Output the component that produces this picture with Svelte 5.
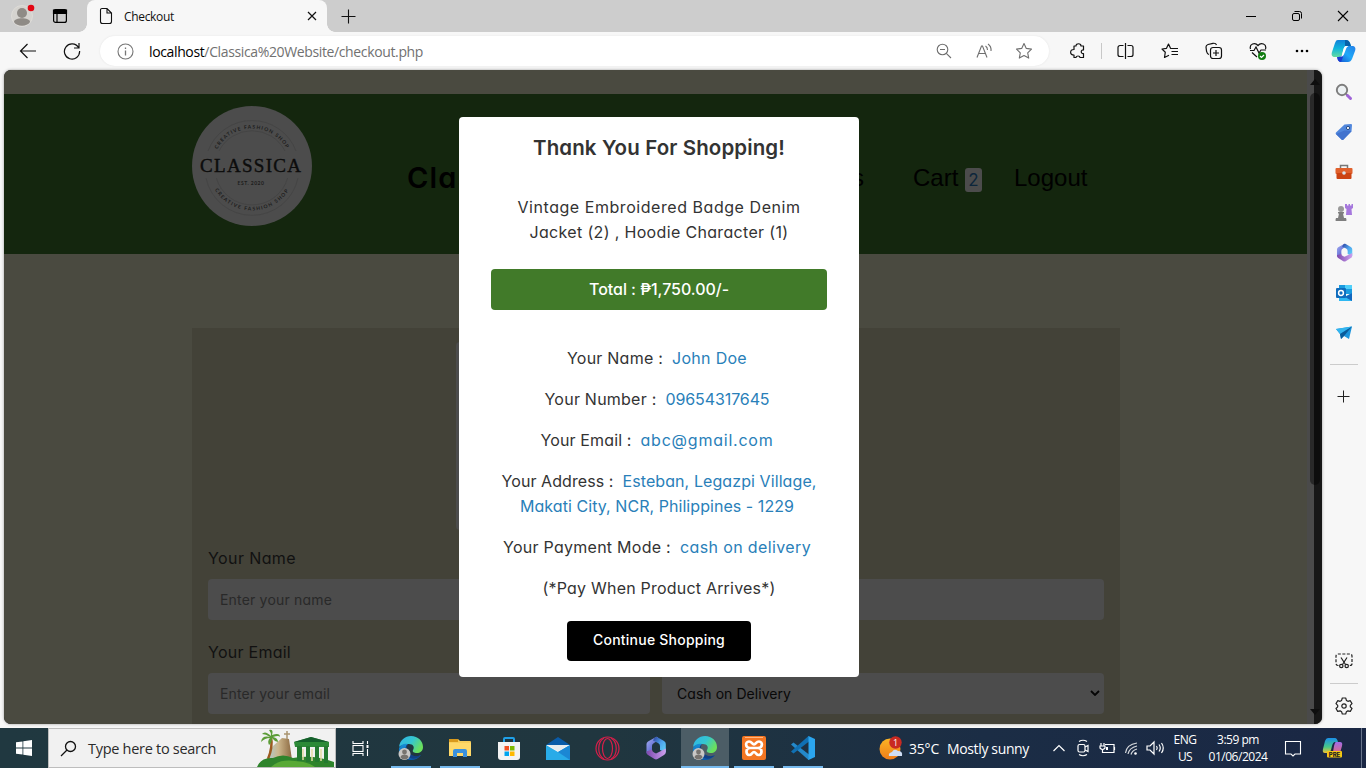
<script>
  const details = [
    [['Your Name :', 96, 'John Doe', 75]],
    [['Your Number :', 112, '09654317645', 104]],
    [['Your Email :', 91, 'abc@gmail.com', 133]],
    [['Your Address :', 112, 'Esteban, Legazpi Village,', 194], ['', 0, 'Makati City, NCR, Philippines - 1229', 274]],
    [['Your Payment Mode :', 168, 'cash on delivery', 131]]
  ];

  // Spreads letters so that a line takes the given width.
  function fit(node, width) {
    const n = node.textContent.length;
    const now = node.getBoundingClientRect().width;
    node.style.letterSpacing = `${(width - now) / n}px`;
  }
</script>

{#snippet edge()}
  <svg width="26" height="26" viewBox="0 0 26 26">
    <defs>
      <linearGradient id="eg1" x1="0" y1="0" x2="1" y2=".5"><stop offset="0" stop-color="#2fb4e8" /><stop offset=".55" stop-color="#35c6d0" /><stop offset="1" stop-color="#6be05c" /></linearGradient>
      <linearGradient id="eg2" x1="0" y1="0" x2="0" y2="1"><stop offset="0" stop-color="#1790d8" /><stop offset="1" stop-color="#0b57a8" /></linearGradient>
    </defs>
    <path d="M1 12C2 5 7 1 13 1c7 0 12 5 12 11 0 4-3 6-6 6s-5-1-4-3c2-3 0-6-4-6C6 9 2 11 1 12z" fill="url(#eg1)" />
    <path d="M1 13c2-4 6-5 9-4-3 2-3 7 0 10 3 3 8 4 13 1-2 3-6 5-10 5C6 25 0 20 1 13z" fill="url(#eg2)" />
    <path d="M10 9c-2 3-1 9 4 11 4 2 7 1 9 0-4 5-11 5-14 0-2-4-2-9 1-11z" fill="#123f84" />
    <circle cx="6.500" cy="19" r="6" fill="#c9c7c5" /><circle cx="6.500" cy="17" r="2.400" fill="#77736f" /><path d="M2.500 22.500c0-4 8-4 8 0-2 2.500-6 2.500-8 0z" fill="#77736f" />
  </svg>
{/snippet}
{#snippet office(s)}
  <svg width={s} height={s} viewBox="0 0 24 24">
    <defs>
      <linearGradient id="of1" x1="0" y1="0" x2="1" y2="1"><stop offset="0" stop-color="#a8b0f4" /><stop offset="1" stop-color="#3b4ac0" /></linearGradient>
      <linearGradient id="of2" x1="0" y1="0" x2="1" y2="1"><stop offset="0" stop-color="#2b3f9c" /><stop offset=".5" stop-color="#4fa4ee" /><stop offset="1" stop-color="#60d8f8" /></linearGradient>
      <linearGradient id="of3" x1="0" y1="0" x2="1" y2="0"><stop offset="0" stop-color="#7d48ae" /><stop offset="1" stop-color="#cda0ee" /></linearGradient>
    </defs>
    <path d="M12 1 4 5.500Q2.500 6.500 2.500 8v9.500l5.500-3V10q0-2 2-3l4-2.500V1.500q-1-1-2-.5z" fill="url(#of1)" />
    <path d="M10.500 1.800Q12 .500 13.500 1.300L20 5q1.800 1 1.800 3v8.500L16 14v-4q0-2-2-3L9 4.500z" fill="url(#of2)" />
    <path d="M2.500 15.500 8 13.500q0 2 2 3l2 1 4-2 5.800-3v3.500q0 2-1.800 3l-6.500 4q-1.500.8-3 0L4 19q-1.500-1-1.500-3.500z" fill="url(#of3)" />
  </svg>
{/snippet}
{#snippet copilot(s)}
  <svg width={s} height={s} viewBox="0 0 26 26">
    <defs>
      <linearGradient id="cp1" x1="0" y1="0" x2="0" y2="1"><stop offset="0" stop-color="#1180d8" /><stop offset=".5" stop-color="#10b5dc" /><stop offset="1" stop-color="#63dca0" /></linearGradient>
      <linearGradient id="cp2" x1="1" y1="0" x2="0" y2="1"><stop offset="0" stop-color="#2480e8" /><stop offset=".5" stop-color="#1fa8f8" /><stop offset="1" stop-color="#1452d0" /></linearGradient>
    </defs>
    <path d="M7 2h8c2 0 3 1 4 3l1 3h-4c-3 0-3 2-4 5l-1 4c-1 2-2 2-4 2H4c-3 0-4-2-3-5L4 5c1-2 1-3 3-3z" fill="url(#cp1)" />
    <path d="M16 8h5c3 0 4 2 3 5l-3 8c-1 2-2 3-4 3h-7c-2 0-3-2-3-5 3 0 4-1 5-3l2-5c0-2 1-3 2-3z" fill="url(#cp2)" />
    <path d="M14 2h1c2 0 3 1 4 3l1 3h-6z" fill="#0761a8" /><path d="M6 19c3 0 4 0 5-2l1 2-2 5c-2 0-4-2-4-5z" fill="#1a3bd0" />
    <path d="M16 8c-3 0-3 2-4 5l-1 4c-.5 1.500-1.500 2-3 2 3 0 4.500-1 5.500-4l1.500-4q.5-2 2.500-3z" fill="#fff" />
  </svg>
{/snippet}

<div class="desk">
  <div class="tabs">
    <div class="tc pic">
      <svg width="26" height="26" viewBox="0 0 26 26"><circle cx="12" cy="13" r="10.500" fill="#d5d3cf" stroke="#dedcd8" /><circle cx="12" cy="10" r="5" fill="#8f8b86" /><path d="M4 19c0-5 16-5 16 0-3 5-13 5-16 0z" fill="#8f8b86" /><circle cx="21" cy="5" r="3.300" fill="#e30613" /></svg>
    </div>
    <div class="tc ws"><svg width="16" height="16" viewBox="0 0 16 16"><rect x="1.600" y="1.600" width="12.800" height="12.800" rx="2" fill="none" stroke="#000" stroke-width="1.200" /><path d="M1.500 2h13v3.500h-13zM5 5v9" stroke="#000" stroke-width="1.200" /></svg></div>
    <div class="tab">
      <svg width="14" height="18" viewBox="0 0 14 18"><path d="M3 1.500h5L12.500 6v8.500a2 2 0 0 1-2 2h-7a2 2 0 0 1-2-2V3a1.500 1.500 0 0 1 1.500-1.500zM8 1.500V6h4.500" fill="none" stroke="#111" stroke-width="1.100" /></svg>
      <span class="tt" use:fit={50}>Checkout</span>
      <svg class="x" width="10" height="10" viewBox="0 0 10 10"><path d="M1 1l8 8M9 1 1 9" stroke="#111" stroke-width="1.200" /></svg>
    </div>
    <svg class="plus" width="15" height="15" viewBox="0 0 15 15"><path d="M7.500.500v14M.500 7.500h14" stroke="#111" stroke-width="1.100" /></svg>
    <div class="win">
      <svg width="46" height="32" viewBox="0 0 46 32"><path d="M18 16.500h10" stroke="#000" /></svg>
      <svg width="46" height="32" viewBox="0 0 46 32"><rect x="18.500" y="13.500" width="7" height="7" rx="1.500" fill="none" stroke="#000" /><path d="M20.500 11.500h5a2 2 0 0 1 2 2v5" fill="none" stroke="#000" /></svg>
      <svg width="46" height="32" viewBox="0 0 46 32"><path d="M18 11l10 10M28 11 18 21" stroke="#000" stroke-width="1.100" /></svg>
    </div>
  </div>

  <div class="bar">
    <div class="b first"><svg width="18" height="16" viewBox="0 0 18 16" class="ln"><path d="M17 8H2M8.500 1 1.500 8l7 7" /></svg></div>
    <div class="b"><svg width="18" height="18" viewBox="0 0 18 18" class="ln"><path d="M15.500 5.500A7.600 7.600 0 1 0 16.600 9M16 1v5h-5" /></svg></div>
    <div class="pill">
      <svg class="info" width="17" height="17" viewBox="0 0 17 17"><circle cx="8.500" cy="8.500" r="7.500" fill="none" stroke="#767676" stroke-width="1.100" /><path d="M8.500 7.500v5M8.500 4.500v1.500" stroke="#767676" stroke-width="1.300" /></svg>
      <span class="url" use:fit={274}><b>localhost</b>/Classica%20Website/checkout.php</span>
      <div class="p"><svg width="16" height="16" viewBox="0 0 16 16" class="gr"><circle cx="6.500" cy="6.500" r="5.300" /><path d="M4 6.500h5M10.300 10.300 15 15" /></svg></div>
      <div class="p"><svg width="17" height="16" viewBox="0 0 17 16" class="gr"><path d="M1 14.500 5.500 3h1L11 14.500M2.800 10.500h6.500M9.500 3c1.500 1 2 2.500 2 4M12 1c2.300 1.500 3.300 4 3 7" /></svg></div>
      <div class="p"><svg width="18" height="18" viewBox="0 0 18 18" class="gr"><path d="M9 1.500l2.300 4.900 5.200.700-3.800 3.700 1 5.300L9 13.600l-4.700 2.500 1-5.300L1.500 7.100l5.200-.700z" stroke-linejoin="round" /></svg></div>
    </div>
    <div class="b ext"><svg width="17" height="17" viewBox="0 0 17 17" class="ln"><path d="M5 3h2c0-3 5-3 5 0h2.500v4c-3-.5-3 4 0 3.500v4H11c0-2-4-2-4 0L5 14.500V12C.5 12 .5 6.500 5 6.500z" stroke-linejoin="round" /></svg></div>
    <i class="div"></i>
    <div class="b split"><svg width="17" height="18" viewBox="0 0 17 18" class="ln"><path d="M6.500 3.500H3a2 2 0 0 0-2 2v7a2 2 0 0 0 2 2h3.500M10.500 3.500H14a2 2 0 0 1 2 2v7a2 2 0 0 1-2 2h-3.500M8.500 1v16" /></svg></div>
    <div class="b"><svg width="18" height="18" viewBox="0 0 18 18" class="ln"><path d="M11 6.500 9.500 6.300 7.500 2 5.500 6.300 1 7l3.300 3.200-.8 5.300L8 13.200M11 6.500h6M10.500 9.500H17M10.500 12.500H17" stroke-linejoin="round" /></svg></div>
    <div class="b"><svg width="18" height="18" viewBox="0 0 18 18" class="ln"><path d="M4 12.500C2 12 2 11 1.500 9L1 5c0-1.500.5-2 2-2.500l5-1.200C10 1 11 1.500 11.500 3" /><rect x="5.500" y="5.500" width="11" height="11" rx="2.500" /><path d="M11 8v6M8 11h6" /></svg></div>
    <div class="b"><svg width="18" height="18" viewBox="0 0 18 18" class="ln"><path d="M1.500 7C0 2 6 0 9 3.500 12 0 18 2 16.500 7M1 8.500h4L7 5l3 6 2-3h5M3 10.500 8 15" /><circle cx="13" cy="14" r="4" fill="#107c10" stroke="none" /><path d="M11 14l1.500 1.500L15 13" stroke="#fff" /></svg></div>
    <div class="b"><svg width="16" height="4" viewBox="0 0 16 4"><circle cx="3" cy="2" r="1.300" /><circle cx="8" cy="2" r="1.300" /><circle cx="13" cy="2" r="1.300" /></svg></div>
    <div class="cp">{@render copilot(26)}</div>
  </div>

  <div class="middle">
    <div class="view">
      <div class="page">
        <header>
          <svg class="logo" width="120" height="120" viewBox="0 0 120 120">
            <defs><path id="arcTop" d="M20.500 62a39.500 39.500 0 0 1 79 0" /><path id="arcBot" d="M16.500 61a43.500 43.500 0 0 0 87 0" /></defs>
            <circle cx="60" cy="60" r="60" fill="#4c4c4c" />
            <g fill="none" stroke="#424242" stroke-width=".7"><path d="M16 45a47 47 0 0 1 88 0M27 45a37 37 0 0 1 66 0M14 72a47 47 0 0 0 92 0M24.400 72a37 37 0 0 0 71.200 0" /></g>
            <g font-family="Lato" font-size="5" font-weight="700" fill="#1c1c1c" text-anchor="middle" letter-spacing="1.100">
              <text><textPath href="#arcTop" startOffset="50%">CREATIVE FASHION SHOP</textPath></text>
              <text letter-spacing="1.300"><textPath href="#arcBot" startOffset="50%">CREATIVE FASHION SHOP</textPath></text>
              <text x="59" y="78.500" letter-spacing=".5">EST. 2020</text>
            </g>
            <text x="8" y="65.500" textLength="101" font-family="Liberation Serif" font-size="19" fill="#0c0c0c" stroke="#0c0c0c" stroke-width=".4">CLASSICA</text>
          </svg>
          <span class="brand">Classica</span>
          <nav><span>Orders</span><span class="cart">Cart <em>2</em></span><span>Logout</span></nav>
        </header>
        <form>
          <div class="orderbox"></div>
          <div class="grid">
            <div class="field wide"><label for="n"><span use:fit={88}>Your Name</span></label><div class="in"><span use:fit={112}>Enter your name</span></div></div>
            <div class="field"><label for="e"><span use:fit={83}>Your Email</span></label><div class="in"><span use:fit={110}>Enter your email</span></div></div>
            <div class="field"><label for="m"></label><div class="in sel"><span use:fit={114}>Cash on Delivery</span><svg width="10" height="6" viewBox="0 0 10 6"><path d="M1 1l4 4 4-4" fill="none" stroke="#050505" stroke-width="1.800" /></svg></div></div>
          </div>
        </form>
      </div>
      <div class="sb"><div class="thumb"></div>
        <svg class="up" width="10" height="6"><path d="M0 6 5 0l5 6z" fill="#0e0e0e" /></svg>
        <svg class="dn" width="10" height="6"><path d="M0 0l5 6 5-6z" fill="#0e0e0e" /></svg>
      </div>

      <div class="modal">
        <h3><span use:fit={252}>Thank You For Shopping!</span></h3>
        <div class="items"><p><span use:fit={283}>Vintage Embroidered Badge Denim</span></p><p><span use:fit={259}>Jacket (2) , Hoodie Character (1)</span></p></div>
        <div class="total"><span use:fit={140}>Total : ₱1,750.00/-</span></div>
        <div class="details">
          {#each details as group}
            <div>
              {#each group as [label, lw, value, vw], i}
                <p class:shift={!(group.length > 1 && i === 0)}>{#if label}<span class="lab" use:fit={lw}>{label}</span>{/if}<span class="val" use:fit={vw}>{value}</span></p>
              {/each}
            </div>
          {/each}
          <p><span use:fit={233}>(*Pay When Product Arrives*)</span></p>
        </div>
        <div class="btn"><span use:fit={132}>Continue Shopping</span></div>
      </div>
    </div>

    <aside>
      <div class="s"><svg width="18" height="18" viewBox="0 0 18 18"><circle cx="7" cy="7" r="5.200" fill="#edf1f3" stroke="#7d7d7d" stroke-width="1.900" /><path d="M11 11l2 2" stroke="#777" stroke-width="2" /><path d="M12.500 12.500l3 3" stroke="#a064d8" stroke-width="3" stroke-linecap="round" /></svg></div>
      <div class="s"><svg width="18" height="18" viewBox="0 0 18 18"><path d="M9.500 1.500 16 1q1 0 1 1l-.5 6.500-8 8q-1 1-2 0L1 11.200q-.8-1 0-1.800z" fill="#5187dc" /><path d="M1 11l8.500-3.500L16.500 8l-8 8.500q-1 1-2 0z" fill="#4273ce" /><circle cx="13" cy="5" r="1.600" fill="#fff" stroke="#284d88" /></svg></div>
      <div class="s"><svg width="18" height="16" viewBox="0 0 18 16"><path d="M5.500 4V1.500h7V4" fill="none" stroke="#777" stroke-width="1.500" /><rect x=".5" y="4" width="17" height="6" rx="1" fill="#e0602c" /><rect x="1.500" y="9" width="15" height="6" rx="1" fill="#cb4312" /><circle cx="9" cy="9" r="1.800" fill="#d8e4ea" /></svg></div>
      <div class="s"><svg width="18" height="19" viewBox="0 0 18 19"><path d="M10 1h2v1.500h1.500V1h1.500v1.500h1.500V1H18v4l-1.500 1 .5 6h-6l.5-6L10 5z" fill="#a678dd" /><circle cx="6" cy="6" r="3" fill="#999" /><path d="M3 9h6v1.500H8L9 15h2q1 3 0 3H1q-1 0 0-3h2l1-4.500H3z" fill="#7e7e7e" /></svg></div>
      <div class="s">{@render office(19)}</div>
      <div class="s"><svg width="18" height="18" viewBox="0 0 18 18"><rect x="4" y="1" width="13" height="9" fill="#1a9bdf" /><rect x="10" y="1" width="7" height="4" fill="#50d0fa" /><path d="M4 9l7 3 6-3v8H4z" fill="#2fb8f2" /><path d="M17 9v8l-7-4z" fill="#1268bf" /><rect x="1" y="4" width="10" height="10" rx="1" fill="#0f6cbd" /><circle cx="6" cy="9" r="2.400" fill="none" stroke="#fff" stroke-width="1.500" /></svg></div>
      <div class="s"><svg width="18" height="16" viewBox="0 0 18 16"><path d="M1 4 17 1.500 14 14l-5-3-3 3-1-5z" fill="#1b94dc" /><path d="M1 4 17 1.500 5 9z" fill="#33b5ef" /><path d="M5 9l12-7.500-8 9.500-3 3z" fill="#095a99" /></svg></div>
      <hr class="h1" />
      <svg class="add" width="13" height="13" viewBox="0 0 13 13"><path d="M6.500.500v12M.500 6.500h12" stroke="#222" /></svg>
      <svg class="snip" width="18" height="16" viewBox="0 0 18 16" fill="none" stroke="#222" stroke-width="1.200"><path d="M3.500 12.500H3a2 2 0 0 1-2-2V3a2 2 0 0 1 2-2h12a2 2 0 0 1 2 2v7.500a2 2 0 0 1-2 2h-.5" stroke-dasharray="3 1.500" /><path d="M6 4.500l4.500 7M12 4.500l-4.500 7" /><circle cx="6.300" cy="13" r="1.700" /><circle cx="11.700" cy="13" r="1.700" /></svg>
      <hr class="h2" />
      <svg class="gear" width="18" height="18" viewBox="0 0 18 18" fill="none" stroke="#222" stroke-width="1.200"><path d="M7.300 1h3.400l.7 2.400 1.500.9 2.400-.6L17 6.600 15.300 8.300v1.500l1.700 1.700-1.700 2.900-2.400-.6-1.500.9-.7 2.300H7.300l-.7-2.300-1.500-.9-2.400.6L1 11.500l1.700-1.700V8.300L1 6.600l1.700-2.900 2.400.6 1.500-.9z" stroke-linejoin="round" /><circle cx="9" cy="9" r="2.200" /></svg>
    </aside>
  </div>

  <div class="task">
    <div class="start"><svg width="16" height="16" viewBox="0 0 16 16"><path d="M0 2.300 6.500 1.400v6.200H0zM7.300 1.300 16 0v7.600H7.300zM0 8.400h6.500v6.200L0 13.700zM7.300 8.400H16V16l-8.700-1.300z" fill="#fff" /></svg></div>
    <div class="search">
      <svg width="17" height="17" viewBox="0 0 17 17"><circle cx="10.500" cy="6.500" r="5" fill="none" stroke="#111" stroke-width="1.300" /><path d="M7 10 1 16" stroke="#111" stroke-width="1.300" /></svg>
      <span use:fit={128}>Type here to search</span>
      <svg class="art" width="78" height="38" viewBox="0 0 78 38">
        <defs><linearGradient id="hill" x1="0" y1="0" x2="1" y2="0"><stop offset="0" stop-color="#a9cdd6" /><stop offset=".45" stop-color="#cdb78d" /><stop offset="1" stop-color="#8b6840" /></linearGradient></defs>
        <path d="M10 32 16 17l9-8 7 1 3 21z" fill="url(#hill)" /><path d="M30 2v8M27 5h6" stroke="#a99470" stroke-width="1.500" />
        <path d="M14 8q2 10-3 22" fill="none" stroke="#9b5a20" stroke-width="2.500" />
        <path d="M14 7Q8 1 5 5q4 0 8 3-8-2-9 5 4-4 9-4-3 3-1 7 3-2 3-7 2 3 6 4 0-4-5-5 6-2 7 0 0-5-8-2Q17 0 12 1q2 2 2 6z" fill="#5b9c37" />
        <path d="M0 38q4-10 16-9 10-5 20 0 20-4 41 4v5z" fill="#2f842c" /><path d="M14 38q8-8 24-6 14 1 20 6z" fill="#58a936" />
        <path d="M37 13l17-5 18 5v5H38z" fill="#2c8a37" /><path d="M37 13l17-5 18 5z" fill="#155f2c" /><path d="M40 17h5v15h-5zM49 17h4v16h-4zM58 17h4v16h-4zM67 17h4v17h-4z" fill="#247a30" /><path d="M46 20v11M55 20v12M64 20v12" stroke="#e5dba2" stroke-width="1.500" />
      </svg>
    </div>
    <div class="tv"><svg width="17" height="17" viewBox="0 0 17 17" fill="none" stroke="#fff" stroke-width="1.100"><path d="M1 1v2.500h10V1M1 16v-2.500h10V16M15.500 1v3M15.500 9v7" /><rect x="1" y="5.500" width="10" height="6" /><rect x="14.500" y="5" width="2" height="3" fill="#fff" stroke="none" /></svg></div>
    <div class="apps">
      <div class="a on">{@render edge()}</div>
      <div class="a on"><svg width="24" height="22" viewBox="0 0 24 22"><path d="M1 2h9l2 2h10q1 0 1 1v13H1z" fill="#f8ce5a" /><path d="M1 2h9v3H1z" fill="#d99a1c" /><path d="M1 6h22v13H1z" fill="#ffd969" /><path d="M5 20v-6q0-2 2-2h10q2 0 2 2v6h-4v-4H9v4z" fill="#3a91dc" /></svg></div>
      <div class="a"><svg width="24" height="25" viewBox="0 0 24 25"><path d="M7 7V3q0-1 1-1h8q1 0 1 1v4" fill="none" stroke="#1fa0e8" stroke-width="2" /><path d="M1 6h22v15q0 3-3 3H4q-3 0-3-3z" fill="#f3f3f3" /><path d="M7.500 10H12v4.500H7.500z" fill="#f25022" /><path d="M13 10h4.500v4.500H13z" fill="#7fba00" /><path d="M7.500 15.500H12V20H7.500z" fill="#00a4ef" /><path d="M13 15.500h4.500V20H13z" fill="#ffb900" /></svg></div>
      <div class="a"><svg width="24" height="23" viewBox="0 0 24 23"><path d="M0 8 12 0l12 8z" fill="#0a5ba8" /><path d="M0 8h24L12 18z" fill="#f5f5f5" /><path d="M0 8l12 7 12-7v15H0z" fill="#28abe8" /><path d="M2 8h20l-10 6.500z" fill="#e8ebee" /><path d="M24 8v15L12 15z" fill="#1b87d4" /></svg></div>
      <div class="a"><svg width="25" height="25" viewBox="0 0 25 25" fill="none" stroke="#d61f4a" stroke-width="1.200"><circle cx="12.500" cy="12.500" r="11.500" /><ellipse cx="12.500" cy="12.500" rx="5" ry="10" /><path d="M9 2C2 6 2 19 9 23M16 2c7 4 7 17 0 21" /></svg></div>
      <div class="a">{@render office(24)}</div>
      <div class="a on active">{@render edge()}</div>
      <div class="a on"><svg width="24" height="24" viewBox="0 0 24 24"><rect width="24" height="24" rx="2" fill="#f37623" /><path d="M3 1.500h18" stroke="#ffb680" /><g fill="none" stroke="#fff" stroke-width="2.700"><path d="M12 12H8C3 12 3 5.500 7 5.500c3 0 3 3 5 3s2-3 5-3c4 0 4 6.500-1 6.500h-4M8 12c-5 0-4 7-1 7 3 0 3-3 5-3s2 3 5 3c3 0 4-7-1-7" /></g></svg></div>
      <div class="a on"><svg width="24" height="24" viewBox="0 0 24 24"><path d="M0 8.500 2.500 6.500 18 18.500V24h-.5z" fill="#2489ca" /><path d="M0 15.500 2.500 17.500 18 5.500V0h-.5z" fill="#1070b3" /><path d="M17.500 0 24 3v18l-6.500 3z" fill="#2ba5ee" /></svg></div>
    </div>
    <div class="weather">
      <svg width="25" height="25" viewBox="0 0 25 25"><defs><linearGradient id="sun" x1="0" y1="0" x2="0" y2="1"><stop offset="0" stop-color="#fbb425" /><stop offset="1" stop-color="#ef7d1a" /></linearGradient></defs><circle cx="11" cy="13" r="10.500" fill="url(#sun)" /><path d="M10 20q-1-3 3-4 2-4 6-1 5 0 4 5z" fill="#cfdef5" /><circle cx="16.500" cy="6.500" r="6.200" fill="#c92a22" /><text x="16.500" y="10" font-family="Open Sans" font-size="9" fill="#fff" text-anchor="middle">1</text></svg>
      <span class="deg" use:fit={30}>35°C</span><span use:fit={82}>Mostly sunny</span>
    </div>
    <div class="tray">
      <svg width="24" height="20" viewBox="0 0 24 20"><path d="M6.500 13 12 7.500l5.500 5.500" /></svg>
      <svg width="24" height="20" viewBox="0 0 24 20"><rect x="7" y="6.500" width="7" height="7.500" rx="1.500" /><path d="M14 9l3-1.500v6L14 12M8 3.500q4-2.500 8 0M8 16.500q4 2.500 8 0" /></svg>
      <svg width="24" height="20" viewBox="0 0 24 20"><path d="M10 6.500h9v8H9M19.500 9v3M6 5v3M9 5v3M5 8h5v2q-2.500 3-5 0zM7.500 11v3.500H10" /><path d="M11 9h2v3h-2z" fill="#fff" stroke="none" /></svg>
      <svg width="24" height="20" viewBox="0 0 24 20"><path d="M6.500 15q1-8.500 11.500-10M9 16q1-6 9-8M12 16.500q1-4 6-5.500" stroke="#d5d8dc" /><circle cx="16.500" cy="15.500" r="1.300" fill="#fff" stroke="none" /></svg>
      <svg width="24" height="20" viewBox="0 0 24 20"><path d="M4 8h3l4-4v12l-4-4H4zM13.500 8q1.500 2 0 4M16 6.500q2.500 3.500 0 7M18.500 5q3.500 5 0 10" /></svg>
    </div>
    <div class="two lang"><span use:fit={23}>ENG</span><span use:fit={14}>US</span></div>
    <div class="two time"><span use:fit={42}>3:59 pm</span><span use:fit={59}>01/06/2024</span></div>
    <svg class="note" width="18" height="18" viewBox="0 0 18 18"><path d="M1.500 1.500h15v12.500H11L9 16l-2-2H1.500z" fill="none" stroke="#fff" stroke-width="1.100" /></svg>
    <div class="pre">
      <svg width="22" height="22" viewBox="0 0 22 22"><defs><linearGradient id="pr1" x1="0" y1="0" x2="0" y2="1"><stop offset="0" stop-color="#1b8fe8" /><stop offset=".6" stop-color="#48c987" /><stop offset="1" stop-color="#f1c232" /></linearGradient><linearGradient id="pr2" x1="0" y1="0" x2="0" y2="1"><stop offset="0" stop-color="#a06be8" /><stop offset="1" stop-color="#f06a65" /></linearGradient></defs><path d="M6 1h7q2 0 3 4h-3q-2 0-3 4l-1 4q-1 3-3 3H3q-3 0-2-4l2-8q1-3 3-3z" fill="url(#pr1)" /><path d="M14 5h4q3 0 2 4l-2 7q-1 3-4 3H8q2 0 3-4l1-6q1-4 2-4z" fill="url(#pr2)" /><rect x="5" y="14" width="15" height="6.500" rx="1" fill="#f7c614" /><text x="12.500" y="19.500" text-anchor="middle" font-family="Inter" font-weight="800" font-size="6" fill="#222">PRE</text></svg>
    </div>
  </div>
</div>

<style>
  :global(body) { margin: 0; overflow: hidden; }
  .desk { width: 1366px; height: 768px; display: flex; flex-direction: column; background: #f7f7f7; font-family: "Open Sans", sans-serif; overflow: hidden; }
  svg { display: block; flex: none; }
  span { white-space: nowrap; }
  .tabs { height: 32px; background: #cdcdcd; display: flex; align-items: center; }
  .tc { display: flex; justify-content: center; }
  .pic { width: 46px; }
  .ws { width: 28px; }
  .tab { position: relative; margin-left: 13px; width: 240px; height: 32px; box-sizing: border-box; padding: 0 10px 0 12px; background: #f7f7f7; border-radius: 8px 8px 0 0; display: flex; align-items: center; }
  .tab::before, .tab::after { content: ""; position: absolute; bottom: 0; width: 8px; height: 8px; }
  .tab::before { left: -8px; background: radial-gradient(circle at 0 0, #cdcdcd 7.500px, #f7f7f7 8px); }
  .tab::after { right: -8px; background: radial-gradient(circle at 100% 0, #cdcdcd 7.500px, #f7f7f7 8px); }
  .tt { margin-left: 11px; font-size: 12px; color: #111; }
  .x { margin-left: auto; }
  .plus { margin-left: 14px; }
  .win { margin-left: auto; display: flex; }

  .bar { height: 38px; display: flex; align-items: center; }
  .b { width: 44px; display: flex; justify-content: center; }
  .first { margin-left: 6px; }
  .ln { fill: none; stroke: #111; stroke-width: 1.200; }
  .gr { fill: none; stroke: #6f6f6f; stroke-width: 1.100; }
  .pill { margin-left: 6px; width: 949px; height: 30px; box-sizing: border-box; padding: 0 5px 0 17px; border-radius: 15px; background: #fff; box-shadow: 0 0 2px #e2e2e2; display: flex; align-items: center; }
  .url { margin-left: 15px; margin-right: auto; font-size: 14px; color: #717171; }
  .url b { font-weight: 400; color: #000; }
  .p { width: 40px; display: flex; justify-content: center; }
  .ext { margin-left: 6px; }
  .split { width: 42px; margin-right: 2px; }
  .div { width: 1px; height: 16px; background: #c8c8c8; margin: 0 2px; }
  .cp { width: 40px; display: flex; justify-content: center; }

  .middle { height: 658px; display: flex; }
  .view { position: relative; margin-left: 4px; width: 1318px; height: 654px; border-radius: 7px; overflow: hidden; display: flex; background: #171717; box-shadow: 0 0 3px #999; }
  .page { width: 1303px; padding-top: 24px; background: #4a4a40; font-family: Inter, sans-serif; font-feature-settings: "cv11"; overflow: hidden; }
  header { height: 160px; background: #14260e; display: flex; box-sizing: border-box; padding: 12px 0 0 188px; }
  .brand { margin: 48px 0 0 95px; font-size: 29px; line-height: 47px; font-weight: 600; color: #000; width: 120px; letter-spacing: 1.200px; }
  nav { display: flex; margin-left: 263px; padding-top: 58px; font: 24px/28px "Liberation Sans", sans-serif; color: #000; }
  nav span:first-child { width: 74px; text-align: right; margin-right: 49px; }
  .cart { width: 101px; }
  em { display: inline-block; font: 17px/24px Inter, sans-serif; width: 17px; height: 24px; text-align: center; background: #4c4c4c; color: #0d263b; border-radius: 3px; vertical-align: 0; }
  form { margin: 74px 0 0 188px; width: 928px; height: 420px; box-sizing: border-box; padding: 14px 16px; background: #434238; }
  .orderbox { width: 400px; height: 188px; margin: 0 auto; background: #4c4c4c; border-radius: 4px; }
  .grid { display: grid; grid-template-columns: 442px 442px; column-gap: 12px; row-gap: 20px; margin-top: 16px; }
  .wide { grid-column: 1 / 3; }
  label { display: block; height: 25px; line-height: 25px; font-size: 16px; color: #111; margin-bottom: 8px; }
  .in { height: 41px; box-sizing: border-box; padding: 0 12px 1px; border-radius: 4px; background: #4c4c4c; font-size: 14px; color: #292929; display: flex; align-items: center; }
  .sel { padding: 0 4px 1px 15px; justify-content: space-between; color: #080808; }
  .sb { width: 15px; position: relative; background: linear-gradient(90deg, #4a4a4a 7px, #171717 7px); }
  .thumb { margin: 23px 0 0 3px; width: 10px; height: 392px; border-radius: 5px; background: linear-gradient(90deg, #292929 4px, #0d0d0d 4px); }
  .up { position: absolute; left: 3px; top: 9px; }
  .dn { position: absolute; left: 3px; bottom: 9px; }

  .modal { position: absolute; left: 455px; top: 47px; width: 400px; height: 560px; box-sizing: border-box; padding: 16px 32px; border-radius: 4px; background: #fff; color: #333; text-align: center; font-family: Inter, sans-serif; font-feature-settings: "cv11"; font-size: 16px; line-height: 25px; display: flex; flex-direction: column; align-items: center; }
  h3 { margin: 0; font-size: 20.500px; line-height: 30px; font-weight: 600; }
  p { margin: 0; height: 25px; }
  .items { margin-top: 32px; }
  .total { margin-top: 24px; width: 336px; height: 41px; line-height: 41px; border-radius: 4px; background: #417a29; color: #fff; font-weight: 500; }
  .details { margin-top: 36px; display: flex; flex-direction: column; gap: 16px; }
  .shift { padding-right: 4px; }
  .lab { margin-right: 9px; }
  .val { color: #2980b9; }
  .btn { margin-top: 20px; width: 184px; height: 40px; line-height: 38px; border-radius: 4px; background: #000; color: #fff; font-size: 14px; font-weight: 500; }

  aside { width: 44px; display: flex; flex-direction: column; align-items: center; padding-top: 2px; }
  .s { height: 40.200px; display: flex; align-items: center; }
  hr { margin: 0; border: 0; width: 28px; height: 1px; background: #ccc; }
  .h1 { margin-top: 11px; }
  .add { margin-top: 25px; margin-right: 1px; }
  .snip { margin-top: 250px; }
  .h2 { margin-top: 14px; }
  .gear { margin-top: 13px; }

  .task { height: 40px; display: flex; align-items: center; background: linear-gradient(90deg, #203840, #20363f 45%, #1b2d45 72%, #1a2744); color: #fff; }
  .start { width: 48px; display: flex; justify-content: center; }
  .search { width: 288px; height: 40px; box-sizing: border-box; border: 1px solid #bdbdbd; background: #f1f1f1; display: flex; align-items: center; padding-left: 11px; color: #2b2b2b; font-size: 14.500px; }
  .search span { margin-left: 11px; }
  .art { margin-left: auto; }
  .tv { width: 51px; box-sizing: border-box; padding-right: 3px; display: flex; justify-content: center; }
  .apps { display: flex; gap: 1px; }
  .a { width: 48px; height: 40px; display: flex; align-items: center; justify-content: center; position: relative; }
  .on::after { content: ""; position: absolute; left: 4px; right: 4px; bottom: 0; height: 2px; background: #76b9ed; }
  .active { background: #4c5d66; }
  .active::after { left: 0; right: 0; }
  .weather { margin-left: 52px; width: 168px; display: flex; align-items: center; font-size: 14px; }
  .deg { margin: 0 8px 0 5px; }
  .tray { display: flex; fill: none; stroke: #fff; stroke-width: 1.200; }
  .two { display: flex; flex-direction: column; align-items: center; font-size: 12px; line-height: 17px; padding-bottom: 1px; }
  .lang { width: 36px; }
  .time { width: 70px; }
  .note { margin-left: 11px; margin-top: 2px; }
  .pre { margin-left: 20px; padding-right: 17px; height: 40px; display: flex; align-items: center; border-right: 1px solid #68748a; }
</style>
